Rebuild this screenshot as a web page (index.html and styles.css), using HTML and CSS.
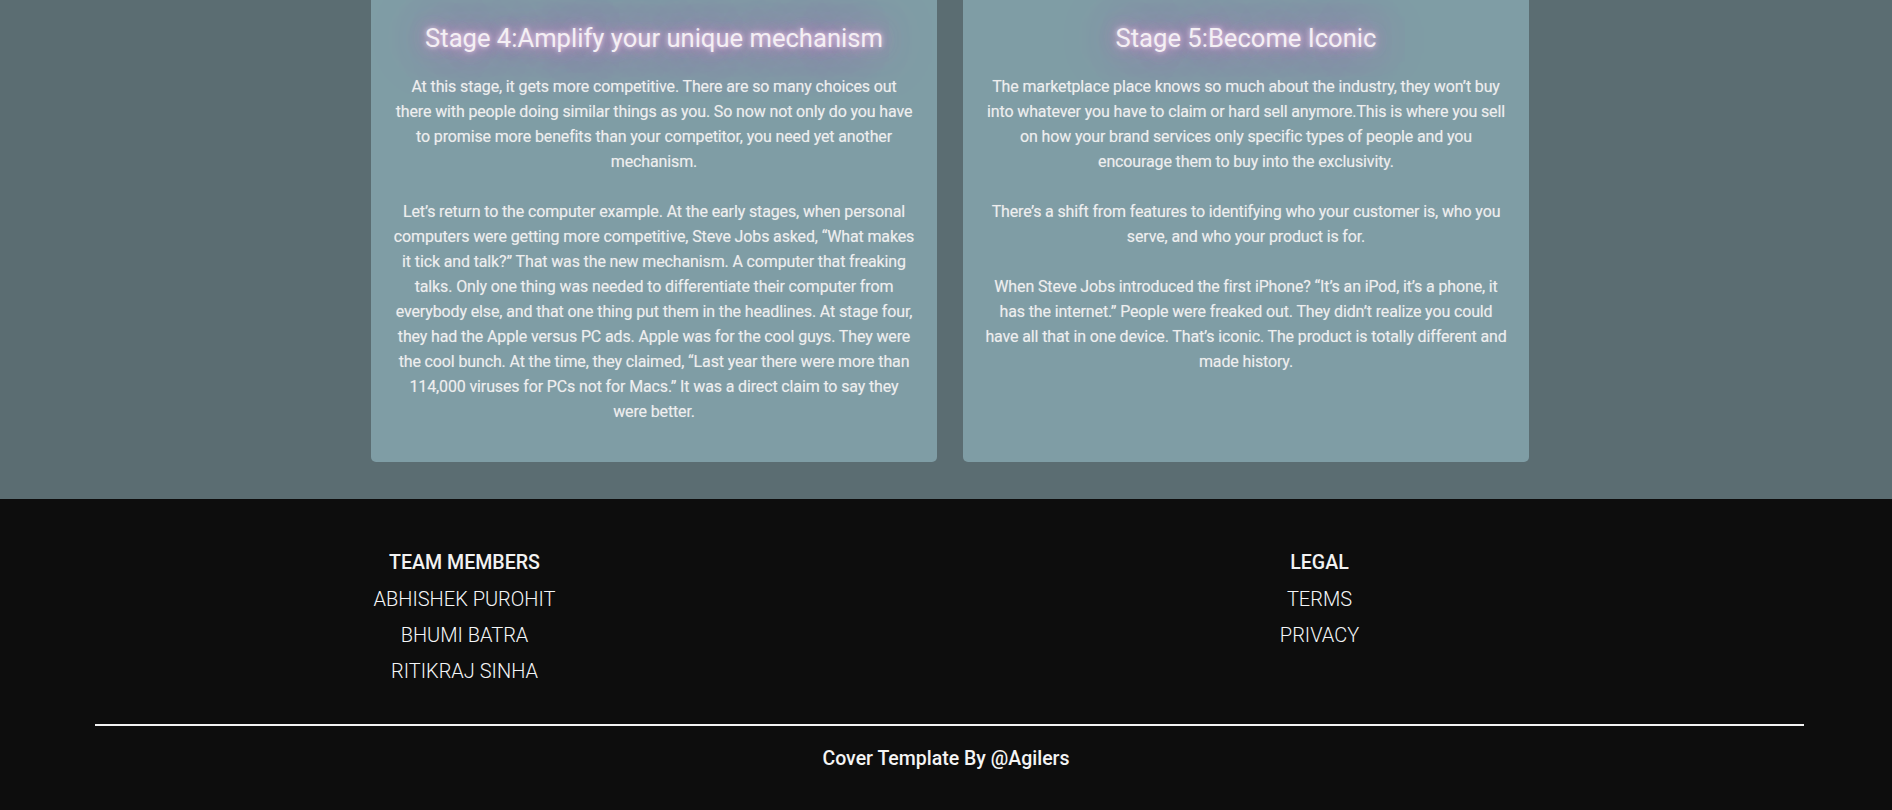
FILE: index.html
```html
<!DOCTYPE html>
<html lang="en">
<head>
<meta charset="utf-8">
<title>Stages</title>
<link rel="stylesheet" href="styles.css">
</head>
<body>
<section class="stages">
  <div class="stage-row">
    <article class="stage-card">
      <h2 class="stage-title">Stage 4:Amplify your unique mechanism</h2>
      <p class="stage-text">At this stage, it gets more competitive. There are so many choices out there with people doing similar things as you. So now not only do you have to promise more benefits than your competitor, you need yet another mechanism.<br><br>Let’s return to the computer example. At the early stages, when personal computers were getting more competitive, Steve Jobs asked, “What makes it tick and talk?” That was the new mechanism. A computer that freaking talks. Only one thing was needed to differentiate their computer from everybody else, and that one thing put them in the headlines. At stage four, they had the Apple versus PC ads. Apple was for the cool guys. They were the cool bunch. At the time, they claimed, “Last year there were more than 114,000 viruses for PCs not for Macs.” It was a direct claim to say they were better.</p>
    </article>
    <article class="stage-card">
      <h2 class="stage-title">Stage 5:Become Iconic</h2>
      <p class="stage-text">The marketplace place knows so much about the industry, they won’t buy into whatever you have to claim or hard sell anymore.This is where you sell on how your brand services only specific types of people and you encourage them to buy into the exclusivity.<br><br>There’s a shift from features to identifying who your customer is, who you serve, and who your product is for.<br><br>When Steve Jobs introduced the first iPhone? “It’s an iPod, it’s a phone, it has the internet.” People were freaked out. They didn’t realize you could have all that in one device. That’s iconic. The product is totally different and made history.</p>
    </article>
  </div>
</section>
<footer class="site-footer">
  <div class="footer-cols">
    <div class="footer-col">
      <h3 class="footer-head">TEAM MEMBERS</h3>
      <ul class="footer-list">
        <li>ABHISHEK PUROHIT</li>
        <li>BHUMI BATRA</li>
        <li>RITIKRAJ SINHA</li>
      </ul>
    </div>
    <div class="footer-col">
      <h3 class="footer-head">LEGAL</h3>
      <ul class="footer-list">
        <li>TERMS</li>
        <li>PRIVACY</li>
      </ul>
    </div>
  </div>
  <hr class="footer-rule">
  <p class="footer-credit">Cover Template By @Agilers</p>
</footer>
</body>
</html>
```
FILE: styles.css
```css
* { box-sizing: border-box; }

body {
  margin: 0;
  font-family: Roboto, "Liberation Sans", Arial, sans-serif;
  background: #0d0d0d;
}

.stages {
  background: #5b6d72;
  height: 499px;
  overflow: hidden;
}

.stage-row {
  display: flex;
  gap: 26px;
  padding-left: 371px;
}

.stage-card {
  width: 566px;
  height: 462px;
  background: #7f9da5;
  border-radius: 0 0 5px 5px;
  padding: 22px 21.5px 0;
  text-align: center;
  color: #eeeeee;
}

.stage-title {
  margin: 0;
  font-size: 25.6px;
  font-weight: 400;
  line-height: 32px;
  color: #f4eff4;
  text-shadow: 0 0 5px rgba(255, 235, 252, 0.8), 0 0 14px #dc8fd4, 0 0 30px #cf72c4, 0 0 56px #bf62b6;
}

.stage-title + .stage-text { margin-top: 20px; }

.stage-text {
  margin: 0;
  font-size: 16px;
  line-height: 25px;
  font-weight: 400;
  letter-spacing: -0.135px;
  text-shadow: 0 0 1px rgba(255, 255, 255, 0.35);
}

.site-footer {
  color: #f4f6f8;
  padding-top: 46px;
}

.footer-cols {
  display: grid;
  grid-template-columns: 855px 855px;
  margin-left: 37px;
  text-align: center;
}

.footer-head {
  margin: 0;
  font-size: 19.6px;
  font-weight: 500;
  line-height: 36px;
  color: #f2f2f2;
}

.footer-list {
  list-style: none;
  margin: 0;
  padding: 0;
}

.footer-list li {
  font-size: 20px;
  font-weight: 300;
  line-height: 36px;
}

.footer-rule {
  margin: 35px 0 0 95px;
  width: 1709px;
  border: 0;
  height: 2px;
  background: #f2f2f2;
}

.footer-credit {
  margin: 20px 0 0;
  text-align: center;
  font-size: 19.5px;
  font-weight: 500;
  line-height: 26px;
  color: #f4f4f4;
  padding-bottom: 40px;
}
```
